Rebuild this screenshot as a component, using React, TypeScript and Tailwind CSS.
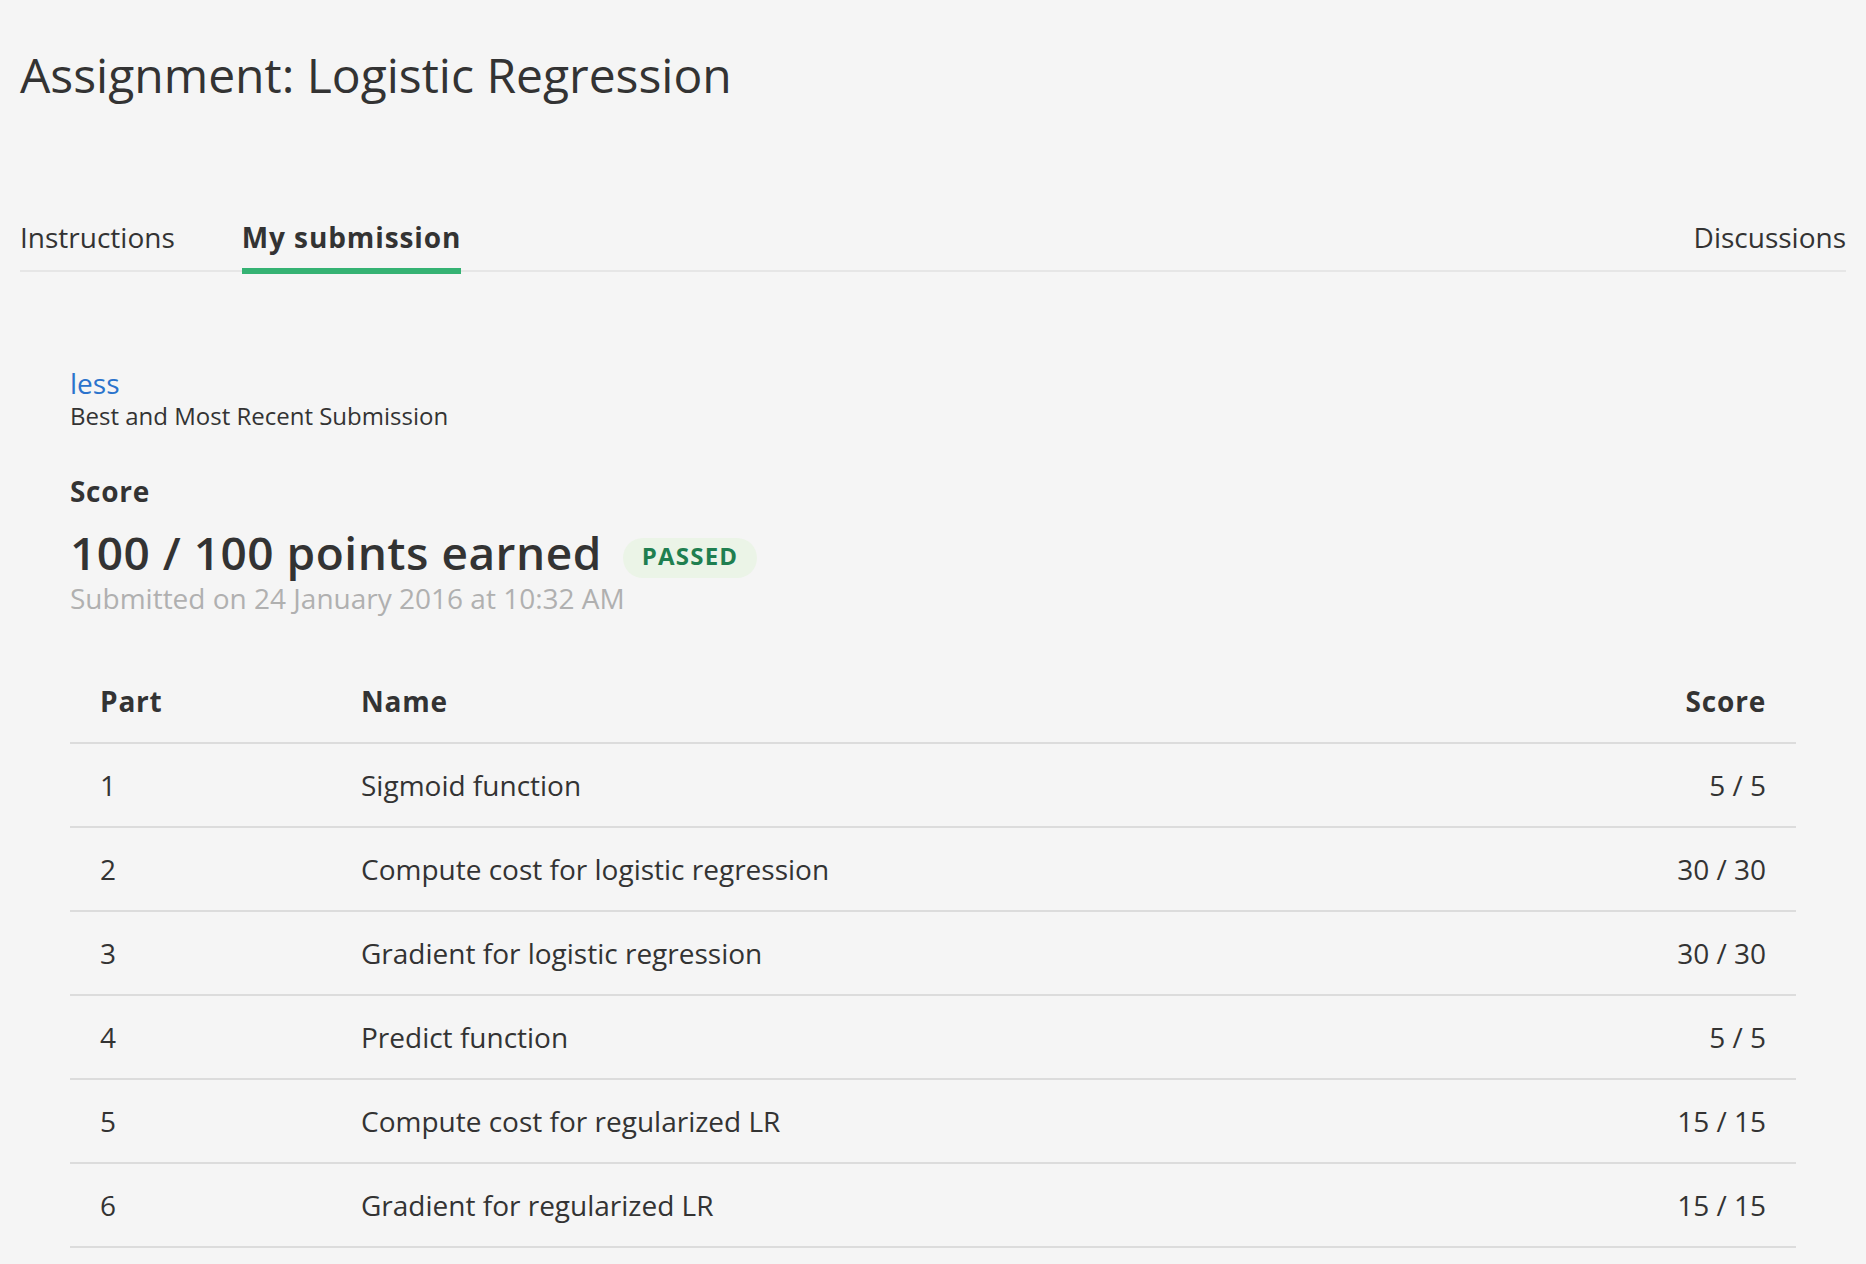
import React from "react";

const parts = [
  { part: 1, name: "Sigmoid function", score: "5 / 5" },
  { part: 2, name: "Compute cost for logistic regression", score: "30 / 30" },
  { part: 3, name: "Gradient for logistic regression", score: "30 / 30" },
  { part: 4, name: "Predict function", score: "5 / 5" },
  { part: 5, name: "Compute cost for regularized LR", score: "15 / 15" },
  { part: 6, name: "Gradient for regularized LR", score: "15 / 15" },
];

export default function App() {
  return (
    <div className="min-h-screen bg-[#f5f5f5] px-[20px] font-['Open_Sans',sans-serif] text-[#333333]">
      {/* Title */}
      <h1 className="pt-[45px] text-[48px] leading-[60px] font-normal">
        Assignment: Logistic Regression
      </h1>

      {/* Tabs */}
      <div className="mt-[112px] flex items-start border-b-2 border-[#e6e6e6]">
        <div className="pb-[13px] text-[28px] leading-[40px]">Instructions</div>
        <div className="ml-[67px] -mb-[4px] border-b-[6px] border-[#35b273] pb-[11px] text-[28px] leading-[40px] font-bold tracking-[0.9px]">
          My submission
        </div>
        <div className="ml-auto pb-[13px] text-[28px] leading-[40px]">Discussions</div>
      </div>

      {/* Submission */}
      <div className="px-[50px]">
        <a className="mt-[94px] block text-[28px] leading-[34px] text-[#2a73cc]">less</a>
        <div className="text-[24px] leading-[32px]">Best and Most Recent Submission</div>

        <div className="mt-[39px] text-[28px] leading-[40px] font-bold tracking-[0.7px]">Score</div>
        <div className="mt-[13px] flex items-start">
          <div className="text-[46px] leading-[56px] font-semibold tracking-[0.5px]">100 / 100 points earned</div>
          <span className="ml-[21px] mt-[14px] flex h-[40px] items-center rounded-full bg-[#ebf4e7] px-[19px] pb-[4px] text-[24px] leading-none font-bold tracking-[1.2px] text-[#1f7f50]">
            PASSED
          </span>
        </div>
        <div className="text-[28px] leading-[36px] text-[#b0b0b0]">
          Submitted on 24 January 2016 at 10:32 AM
        </div>

        {/* Table */}
        <div className="mt-[44px]">
          <div className="grid h-[84px] grid-cols-[291px_1fr_auto] items-center border-b-2 border-[#dcdcdc] text-[28px] leading-[40px] font-bold tracking-[0.8px]">
            <div className="pl-[30px]">Part</div>
            <div>Name</div>
            <div className="pr-[30px] text-right">Score</div>
          </div>
          {parts.map((p) => (
            <div
              key={p.part}
              className="grid h-[84px] grid-cols-[291px_1fr_auto] items-center border-b-2 border-[#dcdcdc] text-[28px] leading-[40px]"
            >
              <div className="pl-[30px]">{p.part}</div>
              <div>{p.name}</div>
              <div className="pr-[30px] text-right">{p.score}</div>
            </div>
          ))}
        </div>
      </div>
    </div>
  );
}
